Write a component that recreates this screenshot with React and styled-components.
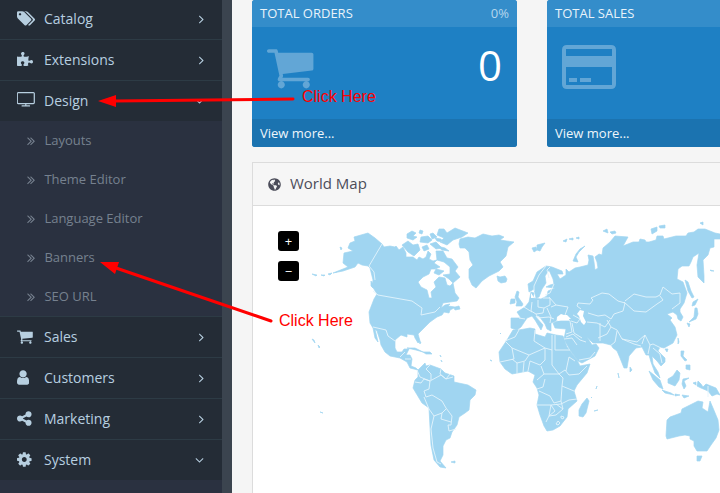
import React from "react";
import styled, { createGlobalStyle } from "styled-components";
import { FaPuzzlePiece, FaGlobeAmericas } from "react-icons/fa";

const Global = createGlobalStyle`
  *, *::before, *::after { box-sizing: border-box; }
  html, body, #root { height: 100%; }
  body { margin: 0; overflow: hidden; background: #f5f5f5; font-family: "Open Sans", sans-serif; font-size: 13px; }
  a { text-decoration: none; }
`;

const Page = styled.div`
  position: relative;
  display: flex;
  min-height: 100vh;
  height: 100%;
  overflow: hidden;
`;
const Sidebar = styled.nav`
  flex: 0 0 232px;
  background: #2a3140;
  border-right: 10px solid #3b444f;
`;
const Menu = styled.ul`
  list-style: none;
  margin: -2px 0 0;
  padding: 0;
`;
const MenuLink = styled.a`
  display: flex;
  align-items: center;
  height: 41px;
  padding: 0 18px 0 17px;
  border-top: 1px solid #2d3b45;
  background: #242c36;
  color: #b7cfe0;
  font-size: 14px;
  line-height: 20px;
`;
const MenuIcon = styled.span`
  display: flex;
  width: 27px;
  padding-bottom: 2px;
`;
const MenuLabel = styled.span`
  flex: 1;
`;
const SubMenu = styled.ul`
  list-style: none;
  margin: 0;
  padding: 0;
`;
const SubLink = styled.a`
  display: flex;
  align-items: center;
  gap: 9px;
  height: 39px;
  padding: 0 0 2px 26px;
  color: #76818f;
  font-size: 13px;
  line-height: 18px;
`;
const Glyph = styled.svg`
  display: block;
  height: ${(p) => p.$size}px;
  width: auto;
  fill: currentColor;
`;
const Content = styled.main`
  flex: 1;
  min-width: 0;
  overflow: hidden;
  padding-left: 20px;
`;
const Dashboard = styled.div`
  display: flex;
  flex-direction: column;
  gap: 15px;
  min-width: 1150px;
  min-height: 100%;
`;
const Tiles = styled.div`
  display: grid;
  grid-template-columns: repeat(4, 1fr);
  gap: 30px;
`;
const Tile = styled.section`
  border-radius: 3px;
  overflow: hidden;
  background: #1e80c4;
  color: #fff;
`;
const TileHead = styled.header`
  display: flex;
  justify-content: space-between;
  height: 27px;
  padding: 0 8px;
  background: #348dca;
  line-height: 27px;
`;
const TileTitle = styled.h2`
  margin: 0;
  font-size: 13px;
  font-weight: 400;
  color: #e9f3fa;
`;
const Percent = styled.span`
  color: #b5d6ed;
`;
const TileBody = styled.div`
  display: flex;
  justify-content: space-between;
  height: 92px;
  padding: 15px;
`;
const TileIcon = styled.span`
  color: #62a6d6;
`;
const Count = styled.strong`
  font-size: 42px;
  font-weight: 400;
  line-height: 46px;
`;
const TileFoot = styled.a`
  display: block;
  height: 28px;
  padding: 0 8px;
  background: #1b73b0;
  color: #eef6fb;
  line-height: 28px;
`;
const Panel = styled.section`
  flex: 1;
  border: 1px solid #dcdcdc;
  background: #fff;
`;
const PanelHead = styled.header`
  display: flex;
  align-items: center;
  gap: 9px;
  height: 43px;
  padding: 0 15px;
  border-bottom: 1px solid #dcdcdc;
  background: #f6f6f6;
  color: #4c4d5a;
`;
const PanelTitle = styled.h3`
  margin: 0;
  padding-bottom: 2px;
  font-size: 15px;
  font-weight: 400;
  line-height: 20px;
`;
const MapArea = styled.div`
  position: relative;
  padding-bottom: 20px;
`;
const MapDrawing = styled.svg`
  display: block;
  width: 560px;
`;
const ZoomControls = styled.div`
  position: absolute;
  top: 25px;
  left: 25px;
  display: flex;
  flex-direction: column;
  gap: 10px;
`;
const ZoomButton = styled.button`
  width: 21px;
  height: 20px;
  padding: 0;
  border: 0;
  border-radius: 3px;
  background: #000;
  color: #fff;
  font: 13px/20px "Open Sans", sans-serif;
`;
const Arrows = styled.svg`
  position: absolute;
  top: 0;
  left: 0;
  width: 720px;
  height: 493px;
  pointer-events: none;
`;
const Note = styled.span`
  position: absolute;
  top: ${(p) => p.$top}px;
  left: ${(p) => p.$left}px;
  color: #f00;
  font: 16px/20px "Liberation Sans", Arial, sans-serif;
`;

const cartPath = "M704 1536q0 52-38 90t-90 38-90-38-38-90 38-90 90-38 90 38 38 90zm896 0q0 52-38 90t-90 38-90-38-38-90 38-90 90-38 90 38 38 90zm128-1088v512q0 24-16.5 42.5t-40.5 21.5l-1044 122q13 60 13 70 0 16-24 64h920q26 0 45 19t19 45-19 45-45 19h-1024q-26 0-45-19t-19-45q0-11 8-31.5t16-36 21.5-40 15.5-29.5l-177-823h-204q-26 0-45-19t-19-45 19-45 45-19h256q16 0 28.5 6.5t19.5 15.5 13 24.5 8 26 5.5 29.5 4.5 26h1201q26 0 45 19t19 45z";
const anglePath = "M1171 960q0 13-10 23l-466 466q-10 10-23 10t-23-10l-50-50q-10-10-10-23t10-23l393-393-393-393q-10-10-10-23t10-23l50-50q10-10 23-10t23 10l466 466q10 10 10 23z";

const glyphs = {
  tags: ["0 0 1920 1792", "M448 448q0-53-37.5-90.5t-90.5-37.5-90.5 37.5-37.5 90.5 37.5 90.5 90.5 37.5 90.5-37.5 37.5-90.5zm1067 576q0 53-37 90l-491 492q-39 37-91 37-53 0-90-37l-715-716q-38-37-64.5-101t-26.5-117v-416q0-52 38-90t90-38h416q53 0 117 26.5t102 64.5l715 714q37 39 37 91zm384 0q0 53-37 90l-491 492q-39 37-91 37-36 0-59-14t-53-45l470-470q37-37 37-90 0-52-37-91l-715-714q-38-38-102-64.5t-117-26.5h224q53 0 117 26.5t102 64.5l715 714q37 39 37 91z"],
  desktop: ["0 0 1920 1792", "M1760 1120v-960q0-13-9.5-22.5t-22.5-9.5h-1600q-13 0-22.5 9.5t-9.5 22.5v960q0 13 9.5 22.5t22.5 9.5h1600q13 0 22.5-9.5t9.5-22.5zm128-960v960q0 66-47 113t-113 47h-736v128h352q14 0 23 9t9 23v64q0 14-9 23t-23 9h-832q-14 0-23-9t-9-23v-64q0-14 9-23t23-9h352v-128h-736q-66 0-113-47t-47-113v-960q0-66 47-113t113-47h1600q66 0 113 47t47 113z"],
  cart: ["64 0 1728 1792", cartPath],
  user: ["256 0 1280 1792", "M1536 1399q0 109-62.5 187t-150.5 78h-854q-88 0-150.5-78t-62.5-187q0-85 8.5-160.5t31.5-152 58.5-131 94-89 134.5-34.5q131 128 313 128t313-128q76 0 134.5 34.5t94 89 58.5 131 31.5 152 8.5 160.5zm-256-887q0 159-112.5 271.5t-271.5 112.5-271.5-112.5-112.5-271.5 112.5-271.5 271.5-112.5 271.5 112.5 112.5 271.5z"],
  share: ["128 0 1536 1792", "M1344 1024q133 0 226.5 93.5t93.5 226.5-93.5 226.5-226.5 93.5-226.5-93.5-93.5-226.5q0-12 2-34l-360-180q-92 86-218 86-133 0-226.5-93.5t-93.5-226.5 93.5-226.5 226.5-93.5q126 0 218 86l360-180q-2-22-2-34 0-133 93.5-226.5t226.5-93.5 226.5 93.5 93.5 226.5-93.5 226.5-226.5 93.5q-126 0-218-86l-360 180q2 22 2 34t-2 34l360 180q92-86 218-86z"],
  cog: ["128 0 1536 1792", "M1152 896q0-106-75-181t-181-75-181 75-75 181 75 181 181 75 181-75 75-181zm512-109v222q0 12-8 23t-20 13l-185 28q-19 54-39 91 35 50 107 138 10 12 10 25t-9 23q-27 37-99 108t-94 71q-12 0-26-9l-138-108q-44 23-91 38-16 136-29 186-7 28-36 28h-222q-14 0-24.5-8.5t-11.5-21.5l-28-184q-49-16-90-37l-141 107q-10 9-25 9-14 0-25-11-126-114-165-168-7-10-7-23 0-12 8-23 15-21 51-66.5t54-70.5q-27-50-41-99l-183-27q-13-2-21-12.5t-8-23.5v-222q0-12 8-23t19-13l186-28q14-46 39-92-40-57-107-138-10-12-10-24 0-10 9-23 26-36 98.5-107.5t94.5-71.5q13 0 26 10l138 107q44-23 91-38 16-136 29-186 7-28 36-28h222q14 0 24.5 8.5t11.5 21.5l28 184q49 16 90 37l142-107q9-9 24-9 13 0 25 10 129 119 165 170 7 8 7 22 0 12-8 23-15 21-51 66.5t-54 70.5q26 50 41 98l183 28q13 2 21 12.5t8 23.5z"],
  right: ["589 0 640 1792", anglePath],
  down: ["320 0 1152 1792", "M1395 736q0 13-10 23l-466 466q-10 10-23 10t-23-10l-466-466q-10-10-10-23t10-23l50-50q10-10 23-10t23 10l393 393 393-393q10-10 23-10t23 10l50 50q10 10 10 23z"],
};

function Icon({ name, size = 17 }) {
  const [box, d] = glyphs[name];
  return <Glyph viewBox={box} $size={size} aria-hidden="true"><path d={d} /></Glyph>;
}

function DoubleAngle() {
  return (
    <Glyph viewBox="430 -100 1200 1792" $size={14} aria-hidden="true">
      <path d={anglePath} />
      <path d={anglePath} transform="translate(384 0)" />
    </Glyph>
  );
}

function CardIcon() {
  return (
    <Glyph viewBox="0 0 54 50" $size={50} aria-hidden="true">
      <path fillRule="evenodd" d="M5 3H49Q54 3 54 8V42Q54 47 49 47H5Q0 47 0 42V8Q0 3 5 3ZM4 7V14H50V7ZM4 25V43H50V25Z" />
      <path d="M7 36h8v4H7zM18 36h11v4H18z" />
    </Glyph>
  );
}

const menu = [
  { label: "Catalog", icon: "tags" },
  { label: "Extensions" },
  { label: "Design", icon: "desktop", open: true, items: ["Layouts", "Theme Editor", "Language Editor", "Banners", "SEO URL"] },
  { label: "Sales", icon: "cart" },
  { label: "Customers", icon: "user" },
  { label: "Marketing", icon: "share" },
  { label: "System", icon: "cog", open: true },
];

const land = [
  // North America
  "M354 237L361 235 368 233 375 238 382 244 384 247 390 246 395 247 396 246 399 250 403 247 406 253 406 257 413 257 417 260 419 257 423 259 426 257 428 251 431 254 429 259 433 261 437 260 434 263 440 267 435 269 431 269 429 274 423 277 418 282 421 287 427 290 429 298 432 298 431 292 436 287 434 282 439 277 445 278 447 285 450 286 453 283 455 293 459 298 457 301 443 303 441 308 445 305 450 304 448 306 455 307 459 306 460 309 455 310 454 308 450 310 449 313 444 312 442 315 437 317 430 322 426 326 418 334 420 341 418 343 415 338 414 335 407 334 407 337 401 335 395 340 395 348 397 352 402 352 404 349 409 349 406 355 410 355 412 359 411 366 416 368 418 370 410 368 407 362 400 358 395 357 390 356 385 352 381 345 380 340 377 331 375 329 378 342 375 338 373 328 370 323 369 312 374 299 377 294 372 286 373 280 370 268 368 266 362 265 358 263 355 267 343 271 333 273 348 267 343 263 344 253 353 251 348 248 350 243 355 241Z",
  // Arctic islands and Baffin
  "M402 245L408 241 413 245 418 244 420 250 414 256 408 252Z",
  "M407 234L412 231 416 233 413 236 417 237 413 240 407 238Z",
  "M420 230l3 1-1 3-3-1zM421 237l7-1 4 4-4 3-8-1zM430 234l3-1 4 4-5 2zM422 247l5-2 2 4-5 2zM430 244l6-2 6 6-6 1zM435 238l6 1 2 3-6-1zM439 229l5 0 3 4 8-5 13 5-6 4-9 3-6 5-7-3 4-4-7-3zM437 246l8 2 4 3-7-1z",
  "M436 251L443 251 447 258 452 259 458 267 455 271 460 277 453 283 449 279 443 275 450 274 450 267 444 262 437 260Z",
  "M436 269l8 2-5 4-5-2z",
  // Greenland and Iceland
  "M460 239L468 237 475 238 483 234 492 236 499 235 504 237 500 240 514 242 508 247 506 256 500 262 503 267 499 271 489 276 482 281 476 288 472 285 469 278 469 269 473 265 470 260 469 252 465 248 460 248 459 244Z",
  "M497 276l3 1 5-1 2 3-1 3-5 1-3-2z",
  // Eurasia
  "M546 266L552 267 562 271 563 274 557 274 560 279 566 275 566 269 569 272 575 268 580 267 588 265 589 260 588 255 593 256 594 262 595 270 598 268 597 262 595 257 599 254 602 255 603 248 610 242 615 236 628 237 623 246 633 242 639 242 640 239 645 240 646 242 649 242 656 240 657 236 663 236 664 239 676 236 686 236 688 233 694 232 698 229 705 229 715 233 720 234 720 239 714 239 714 247 710 248 708 255 703 260 704 276 704 283 698 277 697 265 699 253 693 257 691 262 689 266 682 266 678 269 677 279 683 282 687 293 684 303 680 309 680 312 683 317 681 321 678 319 677 315 673 312 667 314 672 318 670 320 675 327 677 335 673 343 664 348 660 347 658 351 665 358 665 362 661 366 657 361 652 356 653 364 658 372 660 378 655 373 651 362 649 355 646 355 642 347 636 348 629 356 627 368 624 368 620 358 617 351 613 348 611 345 603 343 593 343 587 337 592 345 596 344 599 348 595 356 582 363 578 361 570 350 564 339 566 329 555 328 553 323 558 321 571 321 568 318 562 315 557 317 556 321 551 323 551 331 547 329 545 324 539 316 535 316 543 325 541 330 535 320 532 316 527 318 521 327 517 330 511 328 511 318 521 318 517 312 525 307 529 302 531 292 534 293 533 298 541 299 547 296 548 291 555 288 546 287 550 285 554 284 553 279 549 270 545 276 546 283 542 289 539 297 536 298 534 289 529 292 528 284 533 281 537 272Z",
  "M517 291l2 1-1 5 5 7-1 2-6 0 1-4-2-5zM511 299l4 0 0 4-5 1z",
  // Northern islands
  "M532 248l4-1 1 3-3 2zM537 245l8-2-3 4-2 4-3-1zM563 241l4-2-1 3zM569 239l4-1 0 2zM576 238l3-1 0 2zM573 261l3-7 4-5 5-3-6 6-3 5 2 5zM603 231l4-2 1 4zM610 232l5-1 1 2-4 1zM651 229l6-2 0 4-5 3zM659 226l6-1 0 3-5 0zM700 223l3-1 0 3zM710 270l4 1-3 0z",
  // Japan, Sakhalin, south-east Asian islands
  "M685 280l3 2 3 9 3 6-2 1-4-7zM693 302l5-3-3 6-3 1zM697 308l1 6-2 5-7 3 5-5 1-9zM687 323l3 1-1 3zM678 338l1 4-1 2zM665 349l3 0-1 3zM630 367l2 3-2 2z",
  "M649 371L654 375 660 380 663 389 659 387 653 380ZM662 390l9 3 3 2-9-2zM668 379l5-3 4-6 3 3-1 7-4 6-7-3zM683 379l6-1-5 3 2 5-2 3-2-5zM681 351l3 0-1 5 4 4-2 1-4-5zM686 365l4 0 0 5-4-1zM675 394l5 1-5 1zM682 395l7 1-5 2zM693 383l3-1 0 3zM698 381l3 3 2 3 3-3 10 4 4 7-3-1-5 2-4-5-7-3-4-2z",
  // Africa
  "M513 330L519 330 530 328 535 329 535 334 545 337 547 333 556 335 563 336 567 347 577 360 580 366 590 364 587 373 577 385 574 391 577 401 568 409 567 417 560 426 553 430 547 431 544 426 540 415 537 405 539 395 537 388 533 382 535 375 528 371 512 374 505 369 500 362 499 352 507 340Z",
  "M587 398l2 3-3 12-3 4-4-1 0-6 3-6z",
  // South America
  "M418 370L425 363 426 366 430 365 441 369 445 373 454 376 454 382 468 385 476 390 475 395 470 400 469 410 465 413 459 417 457 425 452 432 450 438 446 440 443 446 443 455 440 461 446 468 440 467 434 460 431 445 430 427 429 408 422 403 413 388 415 380 418 377Z",
  // Australia
  "M670 417L681 413 682 409 690 405 698 401 703 402 702 408 708 412 710 401 713 408 718 420 719 430 716 438 711 445 707 451 697 451 694 446 694 441 690 439 690 436 685 435 679 436 667 439 666 436 667 420Z",
  "M697 456l5 0-2 5-3 0z",
  // Small islands
  "M407 348l8 0 8 4-7-2zM423 352l7 0 2 2-6 0zM419 341l2 1-1 2zM440 355l1 2zM441 360l1 2zM312 339l2 1 1 3zM318 345l2 2-1 1zM320 412l3 1zM451 462l4-1 0 2zM312 274l5 1-1 1zM321 275l4 0-1 1zM328 274l4-1-2 2zM340 247l2 1-1 2zM596 389l1-3zM591 397l1 1zM594 411l4-1zM371 281l3 5-1 2-2-2zM490 360l2 1zM500 333l1 1zM618 373l1 5z",
];

const borders = [
  "M382 244L369 266 374 272 375 280M373 291L378 295 412 301 422 308 421 315 435 312 440 307",
  "M373 327L386 330 388 336 395 341M400 357L405 352M405 359L411 359M417 370L420 377 430 381 441 375 446 379 453 377M430 365L426 369 431 374 431 380M441 369L440 374 446 379 450 374M415 382L421 383 424 379 430 381 429 389 424 391 426 397 432 395 442 401 446 408 452 416 451 425 448 425 449 431 456 429M424 397L429 409 434 416 442 413 446 409M442 413L441 419 451 422M434 416L431 429 433 448 437 462 441 464",
  "M546 266L539 275 534 286 534 291M550 267L547 270 549 278M554 284L550 293 545 295M538 300L538 307 544 308 550 305 550 298 543 298M532 302L531 311 536 314 543 313 544 308M549 297L556 305 568 307 565 315M536 314L538 318 549 317 554 319M524 307L532 312M519 318L525 319M547 308L551 317 550 323M556 305L551 307M571 321L577 323 580 319 573 315M570 321L572 332 566 334",
  "M581 309L577 306 578 303 590 304 593 300 591 298 602 293 609 294 618 301 625 303 623 311 614 314 611 319 605 315 598 316 588 313M625 301L634 294 646 297 656 297 660 295 663 287 672 294 680 293 680 303 672 309M624 302L634 311 646 312 657 304 663 300 660 296M587 322L597 323 605 327 610 320M600 323L600 341M607 320L611 327 617 330 622 339 637 342 645 335 650 345 653 344 661 348M611 327L607 334 598 338M617 331L615 342 610 346M622 339L634 344 641 346M645 335L642 344M650 345L648 354M653 348L660 354 662 363",
  "M566 337L573 334 580 340 586 342M564 339L572 338 577 345M579 360L590 358 595 352M572 323L574 333 582 338",
  "M519 330L515 337 505 341M506 342L512 348 514 359 500 362M512 348L529 355 545 348 552 350 552 335M535 330L534 341 545 348M555 335L555 350 570 350M545 348L545 360 540 365 530 361 528 371M512 359L517 363 525 361 529 355M517 363L517 374M524 362L523 373M552 350L552 365 559 374 544 374 541 366M559 374L565 370 569 375 579 374 587 366M566 371L569 357 575 361M559 374L563 378 562 386 574 391M544 374L537 380M545 379L543 387 537 389M562 386L561 401 554 403 550 396 539 391M537 405L551 405 561 404 569 400 577 399M561 401L563 409M551 405L549 416 546 422M551 405L555 411 549 416 556 415 563 409 556 404M556 424l2-3 2 2-2 2zM561 416l3 1-1 2-2-1zM708 386v11",
];

function WorldMap() {
  return (
    <MapDrawing viewBox="253 206 560 286" role="img" aria-label="World Map">
      <path d={land.join("")} fill="#a0d5f1" stroke="#a0d5f1" strokeWidth=".7" strokeLinejoin="round" />
      <path d="M580 310l4 1-1 5 3 6-2 3-3-3-2-6-2-2zM557 317l4-3 3 1 3 0 4 4-7 0-6 2zM531 293l2 3 1 2-3 0z" fill="#fff" />
      <path d={borders.join("")} fill="none" stroke="#e4f4fc" strokeWidth=".9" strokeLinejoin="round" />
    </MapDrawing>
  );
}

export default function App() {
  return (
    <Page>
      <Global />
      <Sidebar>
        <Menu>
          {menu.map(({ label, icon, open, items }) => (
            <li key={label}>
              <MenuLink href="#">
                <MenuIcon>{icon ? <Icon name={icon} /> : <FaPuzzlePiece size={16} />}</MenuIcon>
                <MenuLabel>{label}</MenuLabel>
                <Icon name={open ? "down" : "right"} size={14} />
              </MenuLink>
              {items && (
                <SubMenu>
                  {items.map((item) => (
                    <li key={item}><SubLink href="#"><DoubleAngle />{item}</SubLink></li>
                  ))}
                </SubMenu>
              )}
            </li>
          ))}
        </Menu>
      </Sidebar>
      <Content>
        <Dashboard>
          <Tiles>
            <Tile>
              <TileHead><TileTitle>TOTAL ORDERS</TileTitle><Percent>0%</Percent></TileHead>
              <TileBody><TileIcon><Icon name="cart" size={50} /></TileIcon><Count>0</Count></TileBody>
              <TileFoot href="#">View more...</TileFoot>
            </Tile>
            <Tile>
              <TileHead><TileTitle>TOTAL SALES</TileTitle></TileHead>
              <TileBody><TileIcon><CardIcon /></TileIcon></TileBody>
              <TileFoot href="#">View more...</TileFoot>
            </Tile>
          </Tiles>
          <Panel>
            <PanelHead><FaGlobeAmericas size={13} /><PanelTitle>World Map</PanelTitle></PanelHead>
            <MapArea>
              <WorldMap />
              <ZoomControls>
                <ZoomButton type="button" aria-label="Zoom in">+</ZoomButton>
                <ZoomButton type="button" aria-label="Zoom out">−</ZoomButton>
              </ZoomControls>
            </MapArea>
          </Panel>
        </Dashboard>
      </Content>
      <Arrows viewBox="0 0 720 493" aria-hidden="true">
        <path d="M293 99L114 101M271 321L116 268" stroke="#f00" strokeWidth="3" strokeLinecap="round" />
        <path d="M98 101L116 95V107ZM100 262L119 262 115 274Z" fill="#f00" />
      </Arrows>
      <Note $left={302} $top={87}>Click Here</Note>
      <Note $left={279} $top={311}>Click Here</Note>
    </Page>
  );
}
